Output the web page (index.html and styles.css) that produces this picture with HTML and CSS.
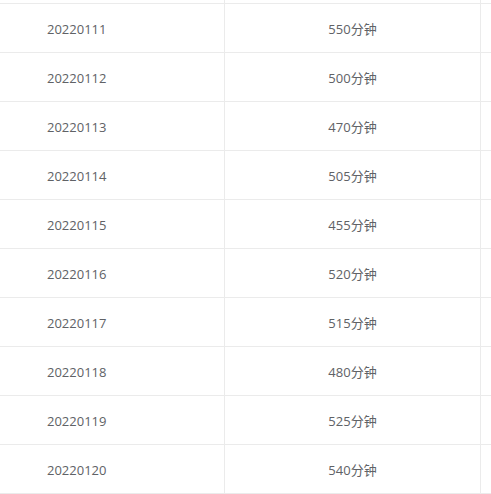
FILE: index.html
```html
<!DOCTYPE html>
<html>
<head>
<meta charset="utf-8">
<link rel="stylesheet" href="styles.css">
</head>
<body>
<div class="table">
  <div class="row top"><div class="cell c1"></div><div class="cell c2"></div><div class="cell c3"></div></div>
  <div class="row"><div class="cell c1">20220111</div><div class="cell c2">550分钟</div><div class="cell c3"></div></div>
  <div class="row"><div class="cell c1">20220112</div><div class="cell c2">500分钟</div><div class="cell c3"></div></div>
  <div class="row"><div class="cell c1">20220113</div><div class="cell c2">470分钟</div><div class="cell c3"></div></div>
  <div class="row"><div class="cell c1">20220114</div><div class="cell c2">505分钟</div><div class="cell c3"></div></div>
  <div class="row"><div class="cell c1">20220115</div><div class="cell c2">455分钟</div><div class="cell c3"></div></div>
  <div class="row"><div class="cell c1">20220116</div><div class="cell c2">520分钟</div><div class="cell c3"></div></div>
  <div class="row"><div class="cell c1">20220117</div><div class="cell c2">515分钟</div><div class="cell c3"></div></div>
  <div class="row"><div class="cell c1">20220118</div><div class="cell c2">480分钟</div><div class="cell c3"></div></div>
  <div class="row"><div class="cell c1">20220119</div><div class="cell c2">525分钟</div><div class="cell c3"></div></div>
  <div class="row"><div class="cell c1">20220120</div><div class="cell c2">540分钟</div><div class="cell c3"></div></div>
</div>
</body>
</html>
```

FILE: styles.css
```css
html, body {
  margin: 0;
  padding: 0;
  background: #ffffff;
}
body {
  font-family: "Open Sans", "Noto Sans CJK SC", sans-serif;
  font-size: 13px;
  color: #606266;
  overflow: hidden;
}
.table {
  display: flex;
  flex-direction: column;
}
.row {
  display: grid;
  grid-template-columns: 225px 256px 1fr;
  height: 49px;
  box-sizing: border-box;
  border-bottom: 1px solid #ebebeb;
}
.row.top {
  height: 4px;
}
.cell {
  display: flex;
  align-items: center;
  box-sizing: border-box;
  border-right: 1px solid #ebebeb;
  padding-top: 1px;
}
.c1 {
  padding-left: 47px;
}
.c2 {
  justify-content: center;
}
.c3 {
  border-right: none;
}
```
